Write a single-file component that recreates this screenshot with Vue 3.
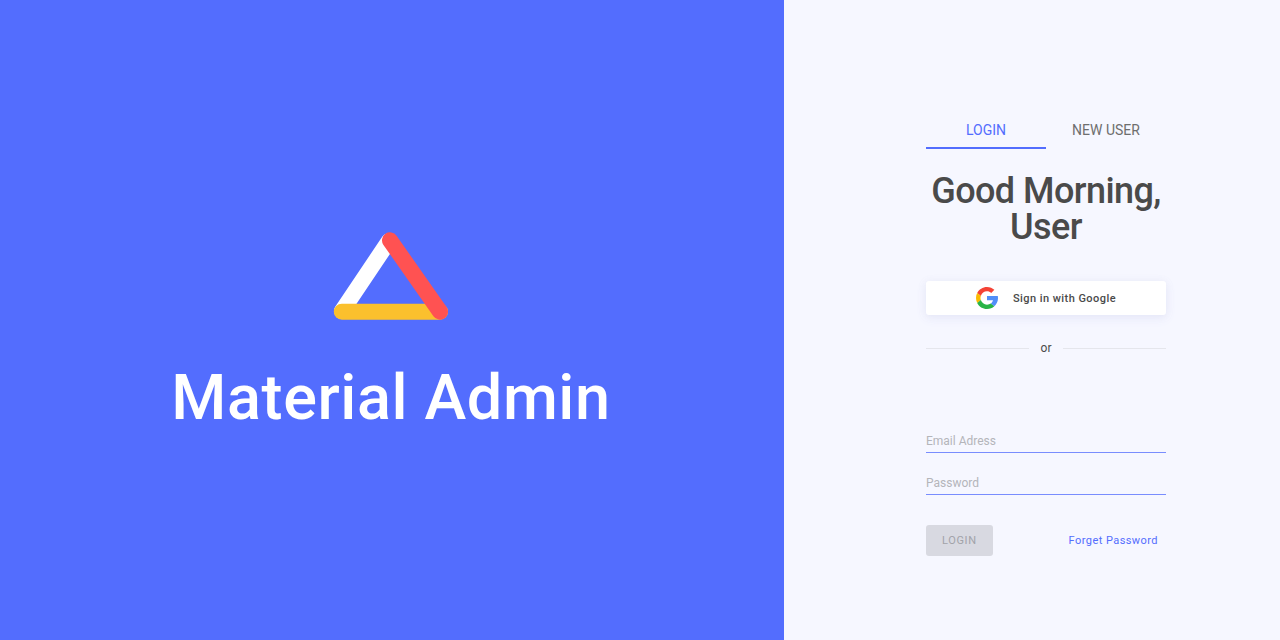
<script setup>
import { ref } from 'vue'

const tabs = ['Login', 'New User']
const activeTab = ref(0)
const email = ref('')
const password = ref('')
</script>

<template>
  <div class="page">
    <section class="brand">
      <svg class="logo" viewBox="0 0 116 88" fill="none" stroke-linecap="round" aria-hidden="true">
        <path d="M56 9 9 79" stroke="#fff" stroke-width="16" />
        <path d="M8.8 79.7H107" stroke="#fbc02d" stroke-width="16" />
        <path d="M57 8.3 107 79.7" stroke="#ff5252" stroke-width="16" />
      </svg>
      <h1 class="brand-name">Material Admin</h1>
    </section>

    <main class="panel">
      <form class="form" @submit.prevent>
        <div class="tabs" role="tablist">
          <button
            v-for="(tab, i) in tabs"
            :key="tab"
            type="button"
            role="tab"
            class="tab"
            :class="{ active: activeTab === i }"
            :aria-selected="activeTab === i"
            @click="activeTab = i"
          >{{ tab }}</button>
        </div>

        <h2 class="greeting">Good Morning, User</h2>

        <button type="button" class="google">
          <svg class="google-icon" viewBox="0 0 48 48" aria-hidden="true">
            <path fill="#f44336" d="M24 9.5c3.54 0 6.71 1.22 9.21 3.6l6.85-6.85C35.9 2.38 30.47 0 24 0 14.62 0 6.51 5.38 2.56 13.22l7.98 6.19C12.43 13.72 17.74 9.5 24 9.5z" />
            <path fill="#518ef8" d="M48 24.5c0-1.6-.15-3.1-.4-5H24v9.5h13c-.6 3-2.3 5.5-4.8 7.2l7.7 6C44.4 38 48 32 48 24.5z" />
            <path fill="#fbbb00" d="M10.53 28.59c-.48-1.45-.76-2.99-.76-4.59s.27-3.14.76-4.59l-7.98-6.19C.92 16.46 0 20.12 0 24c0 3.88.92 7.54 2.56 10.78l7.97-6.19z" />
            <path fill="#28b446" d="M24 48c6.48 0 11.93-2.13 15.89-5.81l-7.73-6c-2.15 1.45-4.92 2.3-8.16 2.3-6.26 0-11.57-4.22-13.47-9.91l-7.98 6.19C6.51 42.62 14.62 48 24 48z" />
          </svg>
          <span>Sign in with Google</span>
        </button>

        <div class="divider"><span>or</span></div>

        <div class="fields">
          <input v-model="email" type="email" class="field" placeholder="Email Adress" aria-label="Email Adress" />
          <input v-model="password" type="password" class="field" placeholder="Password" aria-label="Password" />
        </div>

        <div class="actions">
          <button type="submit" class="login" :disabled="!email || !password">Login</button>
          <a href="#" class="forgot">Forget Password</a>
        </div>
      </form>
    </main>
  </div>
</template>

<style>
body {
  background: #f6f7ff;
}
</style>

<style scoped>
.page {
  display: grid;
  grid-template-columns: minmax(0, 49fr) minmax(0, 31fr);
  min-height: 100vh;
  font-family: Roboto, "Liberation Sans", sans-serif;
  color: #4a4a4a;
}

.page * {
  box-sizing: border-box;
}

button,
input {
  font-family: inherit;
  border: 0;
}

.brand {
  display: flex;
  flex-direction: column;
  align-items: center;
  justify-content: center;
  padding-top: 26px;
  padding-right: 2px;
  background: #536dfe;
}

.logo {
  width: 116px;
  height: 88px;
  margin-bottom: 42px;
}

.brand-name {
  margin: 0;
  color: #fff;
  font-size: 63px;
  font-weight: 500;
  line-height: 72px;
  letter-spacing: 0.00938em;
  white-space: nowrap;
}

.panel {
  display: flex;
  align-items: center;
  justify-content: center;
  padding: 28px 0 0 28px;
  background: #f6f7ff;
}

.form {
  width: 240px;
}

.tabs {
  display: flex;
}

.tab {
  flex: 1;
  height: 37px;
  padding: 0;
  border-bottom: 2px solid transparent;
  background: none;
  color: #6e6e6e;
  font-size: 14px;
  text-transform: uppercase;
  cursor: pointer;
}

.tab.active {
  border-bottom-color: #536dfe;
  color: #536dfe;
}

.greeting {
  margin: 24px 0 36px;
  font-size: 36px;
  font-weight: 500;
  line-height: 36px;
  letter-spacing: -0.01562em;
  text-align: center;
}

.google {
  display: flex;
  align-items: center;
  justify-content: center;
  gap: 15px;
  width: 100%;
  height: 34px;
  border-radius: 3px;
  background: #fff;
  box-shadow: 0 3px 11px #e8eafc, 0 3px 3px -2px #b2b2b21a, 0 1px 8px #9a9a9a1a;
  color: #4a4a4a;
  font-size: 11px;
  font-weight: 500;
  letter-spacing: 0.04em;
  cursor: pointer;
}

.google-icon {
  width: 22px;
  height: 22px;
}

.divider {
  display: flex;
  align-items: center;
  gap: 12px;
  margin: 24px 0 73px;
  font-size: 12px;
  line-height: 18px;
}

.divider::before,
.divider::after {
  content: "";
  flex: 1;
  height: 1px;
  background: #e5e6ec;
}

.fields {
  display: grid;
  gap: 19px;
}

.field {
  width: 100%;
  height: 23px;
  padding: 0;
  border-bottom: 1px solid #798dfe;
  border-radius: 0;
  background: transparent;
  color: #4a4a4a;
  font-size: 12px;
  outline: none;
}

.field::placeholder {
  color: #b4b5ba;
  opacity: 1;
}

.actions {
  display: flex;
  align-items: center;
  justify-content: space-between;
  margin-top: 30px;
  padding-right: 8px;
}

.login {
  height: 31px;
  padding: 0 16px;
  border-radius: 3px;
  background: #536dfe;
  color: #fff;
  font-size: 11px;
  letter-spacing: 0.06em;
  text-transform: uppercase;
}

.login:disabled {
  background: #d8d9e1;
  color: #a2a3a9;
}

.forgot {
  color: #536dfe;
  font-size: 11px;
  letter-spacing: 0.04em;
  text-decoration: none;
}
</style>
